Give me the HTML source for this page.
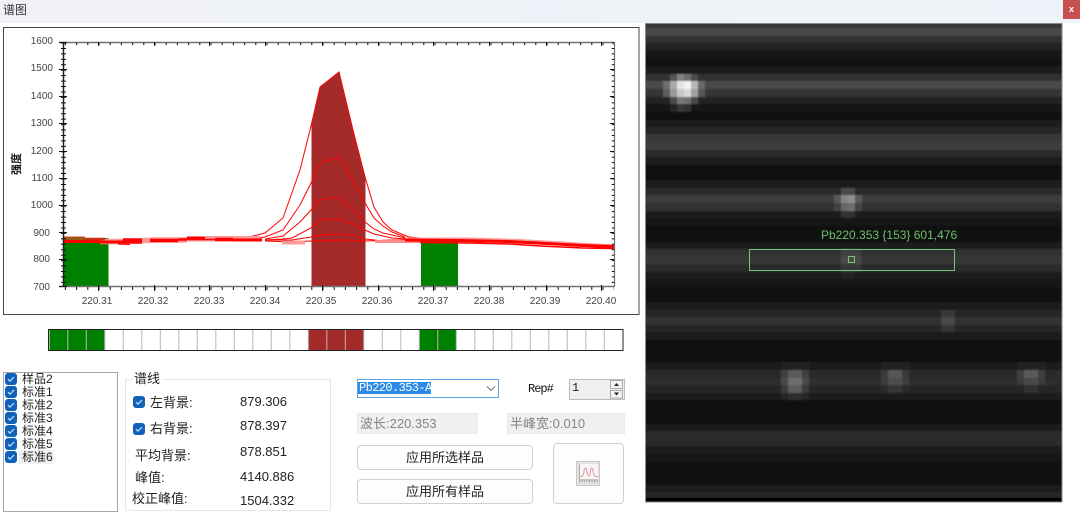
<!DOCTYPE html>
<html lang="zh"><head><meta charset="utf-8"><title>谱图</title>
<style>
html,body{margin:0;padding:0;background:#fff;width:1080px;height:528px;overflow:hidden}
body{position:relative;font-family:"Liberation Sans","Noto Sans CJK SC",sans-serif;color:#222}
.a{position:absolute;white-space:nowrap}
.t{font-size:13px;line-height:16px;height:16px}
.cb{position:absolute;width:12px;height:12px;border-radius:3px;background:#0f62b8}
.cb svg{position:absolute;left:0;top:0}
.li{font-size:12px;line-height:14px;height:14px;left:22px}
.btn{position:absolute;box-sizing:border-box;border:1px solid #d0d0d0;border-radius:4px;background:#fdfdfd;text-align:center;font-size:13px}
.ro{position:absolute;box-sizing:border-box;background:#f0f0f0;border:1px solid #eaeaea;color:#858585;font-size:13px;line-height:20px;padding-left:2px}
svg text{font-family:"Liberation Sans","Noto Sans CJK SC",sans-serif}
</style></head><body>
<div class="a" style="left:0;top:0;width:1080px;height:23px;background:linear-gradient(90deg,#f0f2f7,#edf3f8)"></div>
<div class="a" style="left:3px;top:2px;font-size:12px;line-height:16px;color:#333">谱图</div>
<div class="a" style="left:1063px;top:0;width:17px;height:19px;background:#c75050;color:#fff;font-size:9px;line-height:19px;text-align:center;font-weight:bold">x</div>

<svg class="a" style="left:0;top:0" width="640" height="360" viewBox="0 0 640 360">
<rect x="3.500" y="27.500" width="635.500" height="287" fill="#fff" stroke="#444"/>
<rect x="63" y="238" width="45.500" height="48" fill="#008000"/>
<rect x="421" y="238" width="37" height="48" fill="#008000"/>
<path d="M311.500 286V126L320 87L339 72L353 130L365.500 177V286Z" fill="#a52a2a"/>
<g fill="none" stroke="#f00" stroke-width="1">
<polyline points="245,238 265,233 283,218 300,170 311,126 320,87 339,72 353,130 365,177 374,207 383,222 392,230 409,237 420,238"/>
<polyline points="255,239 265,237 283,230 300,205 311,183 320,163 339,157 353,181 365,203 374,218 383,226 392,232 405,237"/>
<polyline points="265,239 283,236 300,222 311,210 320,200 339,197 353,210 365,222 374,229 383,233 392,235 405,238"/>
<polyline points="265,240 283,239 292,238 311,228 320,220 339,219 353,224 365,230 374,234 383,236 392,238 405,239"/>
<polyline points="265,240 292,240 311,237 320,235 339,234 353,235 365,239 383,241 405,241"/>
<polyline points="265,241 292,242 311,241 339,240 365,241 392,240 420,240"/>
<!-- pale halo of the baseline band -->
<path d="M100 241.500H123M142 240.500H150M150 240H187M187 238.800H260" stroke="#ff9a9a" stroke-width="5.500"/>
<path d="M63 239.500H85" stroke="#ff9a9a" stroke-width="7"/>
<!-- red core of the baseline band -->
<path d="M63 241.500H100V242H123" stroke-width="3"/>
<path d="M63 238.500H85" stroke="#9a5a10" stroke-width="3"/>
<path d="M85 239H105" stroke="#c83010" stroke-width="2.500"/>
<path d="M123 241H142" stroke-width="5.500"/>
<path d="M150 240.500H178" stroke-width="3.500"/>
<path d="M178 239.500H187" stroke-width="2.500"/>
<path d="M187 238.500H205" stroke-width="3.500"/>
<path d="M205 239.500H215" stroke-width="1.500"/>
<path d="M215 239.500H233" stroke-width="3.500"/>
<path d="M233 240H262" stroke-width="3"/>
<polyline points="118,244 130,244.500" stroke-width="1.200"/>
<path d="M282 242.500H305" stroke="#ff9a9a" stroke-width="4"/>
<path d="M375 241.500H420" stroke="#ff8a8a" stroke-width="3"/>
<!-- right baseline band -->
<path d="M405 238.500H470L520 240 570 243 614 245.500" stroke="#ff9a9a" stroke-width="2"/>
<polyline points="405,240 458,240.500 507,241.500 537,243 583,245.500 614,246.500" stroke-width="3"/>
<polyline points="420,242.500 470,243 510,244 540,246 583,248 614,248.500" stroke-width="1.500"/>
</g>
<!-- axes -->
<g stroke="#707070" fill="none">
<line x1="59" y1="42.500" x2="614" y2="42.500" stroke-width="1.500"/>
<line x1="59" y1="286.500" x2="614" y2="286.500" stroke-width="1.500"/>
<line x1="614.500" y1="42" x2="614.500" y2="287" stroke-width="1.200"/>
</g>
<g stroke="#111" fill="none" stroke-width="1">
<line x1="63.500" y1="42" x2="63.500" y2="287" stroke="#222" stroke-width="1.500"/>
<line x1="63.500" y1="42.500" x2="63.500" y2="287" stroke-width="5" stroke-dasharray="1 4.440"/>
<line x1="613" y1="42.500" x2="613" y2="287" stroke-width="2.500" stroke-dasharray="1 4.440"/>
<line x1="64" y1="44" x2="614" y2="44" stroke-width="2.500" stroke-dasharray="1 10.200" stroke-dashoffset="-0.900"/>
<line x1="64" y1="288.500" x2="614" y2="288.500" stroke-width="3" stroke-dasharray="1 10.200" stroke-dashoffset="-0.900"/>
<path d="M59 42.500H67M59 69.500H67M59 96.500H67M59 123.500H67M59 151.500H67M59 178.500H67M59 205.500H67M59 232.500H67M59 259.500H67M59 286.500H67"/>
<path d="M610 69.500H614M610 96.500H614M610 123.500H614M610 151.500H614M610 178.500H614M610 205.500H614M610 232.500H614M610 259.500H614"/>
<path d="M98.500 285V291M154.500 285V291M209.500 285V291M265.500 285V291M322.500 285V291M378.500 285V291M433.500 285V291M489.500 285V291M546.500 285V291M601.500 285V291"/>
<path d="M98.500 42V46M154.500 42V46M209.500 42V46M265.500 42V46M322.500 42V46M378.500 42V46M433.500 42V46M489.500 42V46M546.500 42V46M601.500 42V46"/>
</g>
<g font-size="10" fill="#444" text-anchor="end">
<text x="53" y="44">1600</text><text x="53" y="71">1500</text><text x="53" y="99">1400</text><text x="53" y="126">1300</text><text x="53" y="154">1200</text><text x="53" y="181">1100</text><text x="53" y="208">1000</text><text x="50" y="236">900</text><text x="50" y="262">800</text><text x="50" y="290">700</text>
</g>
<g font-size="10" fill="#444" text-anchor="middle">
<text x="97" y="304">220.31</text><text x="153" y="304">220.32</text><text x="209" y="304">220.33</text><text x="265" y="304">220.34</text><text x="321" y="304">220.35</text><text x="377" y="304">220.36</text><text x="433" y="304">220.37</text><text x="489" y="304">220.38</text><text x="545" y="304">220.39</text><text x="601" y="304">220.40</text>
</g>
<text transform="translate(20,164) rotate(-90)" font-size="11" font-weight="bold" fill="#111" text-anchor="middle">强度</text>
<!-- cell bar -->
<rect x="48.500" y="329.500" width="574.500" height="21" fill="#fff" stroke="#222"/>
<rect x="49.500" y="330" width="55" height="20" fill="#008000"/>
<rect x="308" y="330" width="55.500" height="20" fill="#a52a2a"/>
<rect x="419" y="330" width="37" height="20" fill="#008000"/>
<line x1="67.300" y1="340" x2="622" y2="340" stroke="#b8b8b8" stroke-width="20" stroke-dasharray="1 17.500"/>
</svg>

<!-- list -->
<div class="a" style="left:3px;top:372px;width:115px;height:140px;box-sizing:border-box;border:1px solid #a5a5b0;background:#fff"></div>
<div class="a" style="left:19px;top:450px;width:35px;height:14px;background:#f0f0f0"></div>
<div class="a li" style="top:372px">样品2</div>
<div class="a li" style="top:385px">标准1</div>
<div class="a li" style="top:398px">标准2</div>
<div class="a li" style="top:411px">标准3</div>
<div class="a li" style="top:424px">标准4</div>
<div class="a li" style="top:437px">标准5</div>
<div class="a li" style="top:450px">标准6</div>
<svg class="a" style="left:0;top:370px" width="20" height="100" viewBox="0 0 20 100">
<defs><g id="c"><rect x="5" y="0" width="12" height="12" rx="3" fill="#0f62b8"/><path d="M8 6.200l2 2 4-4.200" stroke="#cfe3f7" stroke-width="1.200" fill="none"/></g></defs>
<use href="#c" y="3"/><use href="#c" y="16"/><use href="#c" y="29"/><use href="#c" y="42"/><use href="#c" y="55"/><use href="#c" y="68"/><use href="#c" y="81"/>
</svg>

<!-- group -->
<div class="a" style="left:125px;top:379px;width:206px;height:132px;box-sizing:border-box;border:1px solid #e6e6e6"></div>
<div class="a t" style="left:132px;top:371px;background:#fff;padding:0 2px">谱线</div>
<div class="cb" style="left:133px;top:396px"><svg width="12" height="12"><path d="M3 6.200l2 2 4-4.200" stroke="#cfe3f7" stroke-width="1.200" fill="none"/></svg></div>
<div class="cb" style="left:133px;top:423px"><svg width="12" height="12"><path d="M3 6.200l2 2 4-4.200" stroke="#cfe3f7" stroke-width="1.200" fill="none"/></svg></div>
<div class="a t" style="left:150px;top:395px">左背景:</div>
<div class="a t" style="left:150px;top:421px">右背景:</div>
<div class="a t" style="left:135px;top:448px">平均背景:</div>
<div class="a t" style="left:135px;top:470px">峰值:</div>
<div class="a t" style="left:132px;top:491px">校正峰值:</div>
<div class="a t" style="left:240px;top:394px">879.306</div>
<div class="a t" style="left:240px;top:418px">878.397</div>
<div class="a t" style="left:240px;top:444px">878.851</div>
<div class="a t" style="left:240px;top:469px">4140.886</div>
<div class="a t" style="left:240px;top:493px">1504.332</div>

<!-- select -->
<div class="a" style="left:357px;top:379px;width:142px;height:19px;box-sizing:border-box;border:1px solid #5aa5e6;background:#fff"></div>
<div class="a" style="left:358px;top:382px;width:73px;height:12px;background:#2a8ae6;color:#fff;font:12px/12px 'Liberation Mono',monospace;letter-spacing:-.6px;padding-left:1px;box-sizing:border-box">Pb220.353-A</div>
<svg class="a" style="left:486px;top:385px" width="10" height="7"><path d="M1 1.500l4 4 4-4" stroke="#777" fill="none"/></svg>
<div class="a" style="left:528px;top:382px;font:12px/14px 'Liberation Mono',monospace;letter-spacing:-1px;color:#111">Rep#</div>
<div class="a" style="left:569px;top:379px;width:56px;height:21px;box-sizing:border-box;border:1px solid #bbb;background:#efefef;font:12px/16px 'Liberation Mono',monospace;padding-left:2px">1</div>
<svg class="a" style="left:610px;top:380px" width="14" height="19"><rect x=".5" y=".5" width="12" height="8" fill="#f4f4f4" stroke="#aaa"/><rect x=".5" y="10.500" width="12" height="7.500" fill="#f4f4f4" stroke="#aaa"/><path d="M4 6l2.500-3L9 6zM4 12.500h5L6.500 15.500z" fill="#222"/></svg>

<div class="ro" style="left:357px;top:413px;width:121px;height:21px">波长:220.353</div>
<div class="ro" style="left:507px;top:413px;width:118px;height:21px;padding-left:2px">半峰宽:0.010</div>
<div class="btn" style="left:357px;top:445px;width:176px;height:25px;line-height:23px">应用所选样品</div>
<div class="btn" style="left:357px;top:479px;width:176px;height:25px;line-height:23px">应用所有样品</div>
<div class="btn" style="left:553px;top:443px;width:71px;height:61px"></div>
<svg class="a" style="left:576px;top:461px" width="25" height="25" viewBox="0 0 25 25"><rect x=".5" y=".5" width="23" height="24" fill="#e2e2e2" stroke="#c8c8c8"/><rect x="3" y="3" width="19" height="15" fill="#f6f6f6"/><path d="M3 15.500H5.500Q7.500 15 8 10 9 5.500 10.500 8 11.500 15 12.800 15 14 15 14.800 8 16 5.500 17 10 17.800 15.500 19.500 15.500H22" stroke="#ee8f96" stroke-width="1" fill="none"/><path d="M3.500 3V19H22" stroke="#aaa" fill="none"/><line x1="3" y1="20.500" x2="22" y2="20.500" stroke="#999" stroke-width="1.500" stroke-dasharray="1 1.500"/></svg>

<!-- image -->
<svg class="a" style="left:645px;top:23px" width="418" height="480" viewBox="645 23 418 480">
<defs><filter id="bl" filterUnits="userSpaceOnUse" x="635" y="13" width="438" height="500"><feGaussianBlur stdDeviation="0.800"/></filter>
<clipPath id="ic"><rect x="645" y="23" width="417" height="479"/></clipPath></defs>
<rect x="645" y="23" width="417" height="479" fill="#101010"/>
<g clip-path="url(#ic)"><g filter="url(#bl)" shape-rendering="crispEdges">
<rect x="635" y="13" width="440" height="15" fill="#373737"/><rect x="635" y="28" width="440" height="8" fill="#484848"/><rect x="635" y="36" width="440" height="7" fill="#303030"/><rect x="635" y="43" width="440" height="7" fill="#222"/><rect x="635" y="50" width="440" height="9" fill="#161616"/><rect x="635" y="66" width="440" height="8" fill="#1c1c1c"/>
<rect x="635" y="74" width="440" height="7" fill="#333"/><rect x="635" y="81" width="440" height="8" fill="#4a4a4a"/><rect x="635" y="89" width="440" height="8" fill="#363636"/><rect x="635" y="97" width="440" height="7" fill="#212121"/><rect x="635" y="104" width="440" height="8" fill="#151515"/><rect x="635" y="120" width="440" height="7" fill="#1a1a1a"/>
<rect x="635" y="127" width="440" height="7" fill="#282828"/><rect x="635" y="134" width="440" height="8" fill="#383838"/><rect x="635" y="142" width="440" height="8" fill="#3c3c3c"/><rect x="635" y="150" width="440" height="7" fill="#2c2c2c"/><rect x="635" y="157" width="440" height="8" fill="#1e1e1e"/><rect x="635" y="180" width="440" height="8" fill="#1a1a1a"/>
<rect x="635" y="188" width="440" height="7" fill="#2a2a2a"/><rect x="635" y="195" width="440" height="8" fill="#3c3c3c"/><rect x="635" y="203" width="440" height="8" fill="#303030"/><rect x="635" y="211" width="440" height="7" fill="#1f1f1f"/><rect x="635" y="218" width="440" height="8" fill="#141414"/><rect x="635" y="242" width="440" height="7" fill="#1e1e1e"/>
<rect x="635" y="249" width="440" height="7" fill="#303030"/><rect x="635" y="256" width="440" height="8" fill="#383838"/><rect x="635" y="264" width="440" height="8" fill="#2a2a2a"/><rect x="635" y="272" width="440" height="7" fill="#1c1c1c"/><rect x="635" y="279" width="440" height="8" fill="#131313"/><rect x="635" y="302" width="440" height="8" fill="#1c1c1c"/>
<rect x="635" y="310" width="440" height="7" fill="#282828"/><rect x="635" y="317" width="440" height="8" fill="#323232"/><rect x="635" y="325" width="440" height="7" fill="#262626"/><rect x="635" y="332" width="440" height="8" fill="#1a1a1a"/><rect x="635" y="362" width="440" height="8" fill="#1b1b1b"/>
<rect x="635" y="370" width="440" height="8" fill="#2c2c2c"/><rect x="635" y="378" width="440" height="7" fill="#2e2e2e"/><rect x="635" y="385" width="440" height="8" fill="#262626"/><rect x="635" y="393" width="440" height="7" fill="#1a1a1a"/><rect x="635" y="424" width="440" height="7" fill="#1c1c1c"/>
<rect x="635" y="431" width="440" height="7" fill="#2a2a2a"/><rect x="635" y="438" width="440" height="8" fill="#2b2b2b"/><rect x="635" y="446" width="440" height="8" fill="#1f1f1f"/><rect x="635" y="454" width="440" height="8" fill="#171717"/><rect x="635" y="485" width="440" height="7" fill="#1a1a1a"/><rect x="635" y="492" width="440" height="6" fill="#262626"/>
<!-- blob 1 -->
<g>
<rect x="670" y="74" width="7" height="7" fill="#555"/><rect x="677" y="74" width="7" height="7" fill="#808080"/><rect x="684" y="74" width="7" height="7" fill="#6e6e6e"/><rect x="691" y="74" width="7" height="7" fill="#4a4a4a"/>
<rect x="663" y="81" width="7" height="8" fill="#707070"/><rect x="670" y="81" width="7" height="8" fill="#a8a8a8"/><rect x="677" y="81" width="7" height="8" fill="#e4e4e4"/><rect x="684" y="81" width="7" height="8" fill="#f2f2f2"/><rect x="691" y="81" width="7" height="8" fill="#b8b8b8"/><rect x="698" y="81" width="7" height="8" fill="#6a6a6a"/>
<rect x="663" y="89" width="7" height="8" fill="#5c5c5c"/><rect x="670" y="89" width="7" height="8" fill="#9a9a9a"/><rect x="677" y="89" width="7" height="8" fill="#c8c8c8"/><rect x="684" y="89" width="7" height="8" fill="#d8d8d8"/><rect x="691" y="89" width="7" height="8" fill="#a0a0a0"/><rect x="698" y="89" width="7" height="8" fill="#585858"/>
<rect x="670" y="97" width="7" height="7" fill="#484848"/><rect x="677" y="97" width="7" height="7" fill="#787878"/><rect x="684" y="97" width="7" height="7" fill="#707070"/><rect x="691" y="97" width="7" height="7" fill="#484848"/>
<rect x="670" y="104" width="7" height="8" fill="#262626"/><rect x="677" y="104" width="7" height="8" fill="#383838"/><rect x="684" y="104" width="7" height="8" fill="#333"/>
</g>
<!-- blob 2 -->
<g>
<rect x="841" y="188" width="14" height="7" fill="#4a4a4a"/>
<rect x="834" y="195" width="7" height="8" fill="#585858"/><rect x="841" y="195" width="7" height="8" fill="#858585"/><rect x="848" y="195" width="7" height="8" fill="#8e8e8e"/><rect x="855" y="195" width="7" height="8" fill="#5a5a5a"/>
<rect x="834" y="203" width="7" height="8" fill="#424242"/><rect x="841" y="203" width="7" height="8" fill="#666"/><rect x="848" y="203" width="7" height="8" fill="#6e6e6e"/><rect x="855" y="203" width="7" height="8" fill="#444"/>
<rect x="841" y="211" width="14" height="7" fill="#303030"/>
</g>
<rect x="841" y="249" width="20" height="7" fill="#404040"/><rect x="841" y="256" width="20" height="8" fill="#4a4a4a"/><rect x="841" y="264" width="20" height="8" fill="#383838"/><rect x="841" y="272" width="14" height="7" fill="#232323"/>
<rect x="941" y="310" width="14" height="7" fill="#383838"/><rect x="941" y="317" width="14" height="8" fill="#484848"/><rect x="941" y="325" width="14" height="7" fill="#343434"/>
<!-- blob 795 -->
<g>
<rect x="781" y="370" width="7" height="8" fill="#404040"/><rect x="788" y="370" width="14" height="8" fill="#5a5a5a"/><rect x="802" y="370" width="7" height="8" fill="#404040"/>
<rect x="781" y="378" width="7" height="7" fill="#484848"/><rect x="788" y="378" width="14" height="7" fill="#6e6e6e"/><rect x="802" y="378" width="7" height="7" fill="#484848"/>
<rect x="781" y="385" width="7" height="8" fill="#3a3a3a"/><rect x="788" y="385" width="14" height="8" fill="#5c5c5c"/><rect x="802" y="385" width="7" height="8" fill="#3a3a3a"/>
<rect x="781" y="393" width="28" height="7" fill="#252525"/><rect x="788" y="393" width="14" height="7" fill="#2e2e2e"/><rect x="781" y="362" width="28" height="8" fill="#222"/>
</g>
<!-- blob 893 -->
<g>
<rect x="881" y="370" width="7" height="8" fill="#3a3a3a"/><rect x="888" y="370" width="14" height="8" fill="#565656"/><rect x="902" y="370" width="7" height="8" fill="#3a3a3a"/>
<rect x="881" y="378" width="7" height="7" fill="#3c3c3c"/><rect x="888" y="378" width="14" height="7" fill="#4e4e4e"/><rect x="902" y="378" width="7" height="7" fill="#3c3c3c"/>
<rect x="881" y="385" width="28" height="8" fill="#2c2c2c"/><rect x="888" y="385" width="14" height="8" fill="#363636"/><rect x="881" y="362" width="28" height="8" fill="#202020"/>
</g>
<!-- blob 1030 -->
<g>
<rect x="1017" y="362" width="28" height="8" fill="#222"/><rect x="1017" y="370" width="7" height="8" fill="#404040"/><rect x="1024" y="370" width="14" height="8" fill="#5a5a5a"/><rect x="1038" y="370" width="7" height="8" fill="#404040"/>
<rect x="1017" y="378" width="7" height="7" fill="#3a3a3a"/><rect x="1024" y="378" width="14" height="7" fill="#484848"/><rect x="1038" y="378" width="7" height="7" fill="#3a3a3a"/>
<rect x="1024" y="385" width="14" height="8" fill="#303030"/>
</g>
</g></g>
<rect x="645" y="498" width="417" height="4" fill="#000"/>
<g fill="none" stroke="#74c574">
<rect x="749.500" y="249.500" width="205" height="21"/>
<rect x="848.500" y="256.500" width="6" height="6"/>
</g>
<text x="821" y="239" font-size="12" fill="#6cbf6c">Pb220.353 {153} 601,476</text>
<rect x="645.500" y="23.500" width="416.500" height="478.500" fill="none" stroke="#8a8a8a"/>
</svg>
</body></html>
